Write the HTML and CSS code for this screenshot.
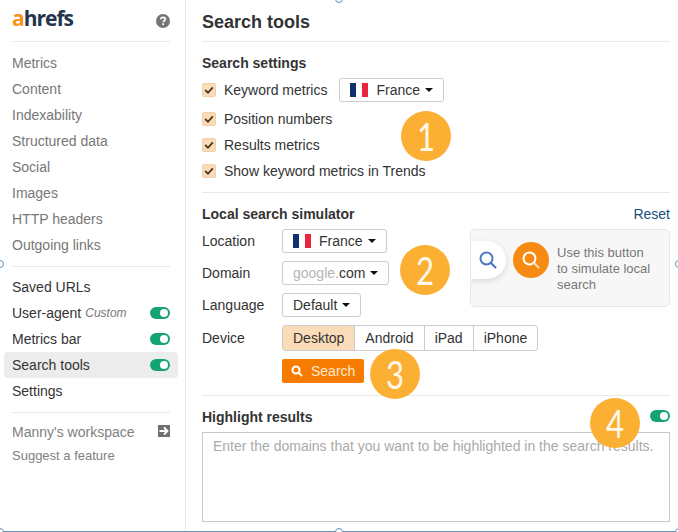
FILE: index.html
```html
<!DOCTYPE html>
<html lang="en">
<head>
<meta charset="utf-8">
<title>Ahrefs - Search tools</title>
<link rel="stylesheet" href="styles.css">
</head>
<body>
<div class="app">
  <aside class="sidebar">
    <div class="brand">
      <span class="logo"><span class="logo-a">a</span>hrefs</span>
      <svg class="help" width="14" height="14" viewBox="0 0 14 14"><circle cx="7" cy="7" r="7" fill="#757575"/><path d="M4.8 5.3C4.9 4 5.8 3.3 7.1 3.3c1.300 0 2.200.8 2.200 1.900 0 1-.6 1.400-1.200 1.800-.5.3-.8.600-.8 1.200" fill="none" stroke="#fff" stroke-width="1.700"/><rect x="6.200" y="9.300" width="1.800" height="1.800" fill="#fff"/></svg>
    </div>
    <nav class="nav nav-muted">
      <a>Metrics</a><a>Content</a><a>Indexability</a><a>Structured data</a><a>Social</a><a>Images</a><a>HTTP headers</a><a>Outgoing links</a>
    </nav>
    <nav class="nav nav-main">
      <a>Saved URLs</a>
      <a>User-agent <em>Custom</em><span class="toggle"></span></a>
      <a>Metrics bar<span class="toggle"></span></a>
      <a class="active">Search tools<span class="toggle"></span></a>
      <a>Settings</a>
    </nav>
    <div class="foot">
      <div class="workspace">Manny's workspace
        <svg width="12" height="12" viewBox="0 0 12 12"><rect width="12" height="12" fill="#707070"/><path d="M1.500 6H9M6 2.500 9.500 6 6 9.500" fill="none" stroke="#fff" stroke-width="1.800"/></svg>
      </div>
      <div class="suggest">Suggest a feature</div>
    </div>
  </aside>

  <main class="main">
    <h1>Search tools</h1>

    <section class="settings">
      <h2>Search settings</h2>
      <div class="check-row first">
        <span class="check"><svg width="10" height="10" viewBox="0 0 10 10"><path d="M1.200 5 4 7.800 8.800 2.400" fill="none" stroke="#4a3320" stroke-width="1.800"/></svg></span>
        <span>Keyword metrics</span>
        <button class="select select-first"><span class="flag"><i class="b"></i><i class="w"></i><i class="r"></i></span>France<span class="caret"></span></button>
      </div>
      <div class="check-row"><span class="check"><svg width="10" height="10" viewBox="0 0 10 10"><path d="M1.200 5 4 7.800 8.800 2.400" fill="none" stroke="#4a3320" stroke-width="1.800"/></svg></span><span>Position numbers</span></div>
      <div class="check-row"><span class="check"><svg width="10" height="10" viewBox="0 0 10 10"><path d="M1.200 5 4 7.800 8.800 2.400" fill="none" stroke="#4a3320" stroke-width="1.800"/></svg></span><span>Results metrics</span></div>
      <div class="check-row"><span class="check"><svg width="10" height="10" viewBox="0 0 10 10"><path d="M1.200 5 4 7.800 8.800 2.400" fill="none" stroke="#4a3320" stroke-width="1.800"/></svg></span><span>Show keyword metrics in Trends</span></div>
    </section>

    <section class="simulator">
      <div class="sim-head"><h2>Local search simulator</h2><a class="reset">Reset</a></div>
      <div class="sim-body">
        <div class="form">
          <div class="form-row"><label>Location</label><button class="select"><span class="flag"><i class="b"></i><i class="w"></i><i class="r"></i></span>France<span class="caret"></span></button></div>
          <div class="form-row"><label>Domain</label><button class="select"><span class="ghost">google.</span>com<span class="caret"></span></button></div>
          <div class="form-row"><label>Language</label><button class="select">Default<span class="caret"></span></button></div>
          <div class="form-row device"><label>Device</label>
            <div class="segments"><span class="seg on">Desktop</span><span class="seg">Android</span><span class="seg">iPad</span><span class="seg">iPhone</span></div>
          </div>
          <div class="form-row submit"><label></label>
            <button class="search-btn"><svg width="12" height="12" viewBox="0 0 12 12"><circle cx="5" cy="5" r="3.500" fill="none" stroke="#fff" stroke-width="2"/><path d="M7.600 7.600 11 11" stroke="#fff" stroke-width="2"/></svg>Search</button>
          </div>
        </div>
        <div class="hint">
          <span class="hint-white"><svg width="20" height="20" viewBox="0 0 20 20"><circle cx="8.500" cy="8.500" r="6" fill="none" stroke="#4a78c4" stroke-width="2"/><path d="M13 13 18 18" stroke="#4a78c4" stroke-width="2.200"/></svg></span>
          <span class="hint-orange"><svg width="20" height="20" viewBox="0 0 20 20"><circle cx="8.500" cy="8.500" r="6" fill="none" stroke="#fff" stroke-width="2"/><path d="M13 13 18 18" stroke="#ffdcb4" stroke-width="2.200"/></svg></span>
          <p>Use this button to simulate local search</p>
        </div>
      </div>
    </section>

    <section class="highlight">
      <div class="hl-head"><h2>Highlight results</h2><span class="toggle"></span></div>
      <div class="textarea">Enter the domains that you want to be highlighted in the search results.</div>
    </section>
  </main>
</div>

<span class="badge b1"><span class="digit">1</span></span>
<span class="badge b2"><span class="digit">2</span></span>
<span class="badge b3"><span class="digit">3</span></span>
<span class="badge b4"><span class="digit">4</span></span>

<span class="handle h-top"></span>
<span class="handle h-left"></span>
<span class="handle h-right"></span>
<span class="handle h-bottom"></span>
<span class="handle h-bl"></span>
<span class="handle h-br"></span>
</body>
</html>
```
FILE: styles.css
```css
* { box-sizing: border-box; }
html, body { margin: 0; height: 100%; }
body {
  position: relative;
  width: 678px;
  height: 532px;
  overflow: hidden;
  background: #fff;
  font: 14px/20px "Liberation Sans", Arial, sans-serif;
  color: #333;
}
.app { display: flex; height: 532px; border-bottom: 1px solid #6f94b5; }

/* Sidebar */
.sidebar { width: 186px; flex: none; border-right: 1px solid #e6e8ec; padding: 0 7px 0 4px; }
.brand {
  display: flex; justify-content: space-between; align-items: center;
  height: 42px; margin: 0 8px 8px 8px; padding: 0 0 2px; border-bottom: 1px solid #e8e8e8;
}
.logo { font: 700 21px/24px "Open Sans", "Liberation Sans", sans-serif; letter-spacing: -1px; color: #24344d; margin-top: -3px; }
.logo-a { color: #f7941d; }
.help { margin-top: 3px; }
.nav a { display: flex; align-items: center; height: 26px; padding: 0 8px; white-space: nowrap; }
.nav-muted { color: #777; padding-bottom: 8px; }
.nav-main { padding-top: 8px; position: relative; }
.nav-main::before { content: ""; position: absolute; top: 0; left: 8px; right: 8px; border-top: 1px solid #e8e8e8; }
.nav-main a { color: #333; }
.nav-main em { color: #777; font-size: 12px; margin-left: 4px; }
.nav-main a.active { background: #ececec; border-radius: 4px; }
.nav-main a .toggle { margin-left: auto; }
.toggle {
  display: block; position: relative; flex: none;
  width: 20px; height: 12px; border-radius: 6px; background: #16a374;
}
.toggle::after {
  content: ""; position: absolute; right: 2px; top: 2px;
  width: 8px; height: 8px; border-radius: 50%; background: #fff;
}
.foot { margin: 8px 8px 0; padding-top: 8px; border-top: 1px solid #e8e8e8; color: #808080; }
.workspace { display: flex; justify-content: space-between; align-items: center; height: 22px; }
.workspace svg { margin-top: -3px; }
.suggest { font-size: 13px; margin-top: 1px; height: 24px; line-height: 24px; }

/* Main */
.main { flex: 1; padding: 0 8px 0 16px; min-width: 0; }
h1 { margin: 0; height: 42px; font-size: 18px; line-height: 44px; font-weight: 700; border-bottom: 1px solid #e8e8e8; }
h2 { margin: 0; font-size: 14px; line-height: 20px; font-weight: 700; }
.settings { padding: 11px 0; border-bottom: 1px solid #e8e8e8; height: 151px; }
.check-row { display: flex; align-items: center; height: 26px; }
.check-row.first { height: 28px; margin-top: 3px; margin-bottom: 2px; }
.check {
  display: flex; align-items: center; justify-content: center; flex: none;
  width: 14px; height: 14px; margin-right: 8px;
  background: #fbdcb8; border: 1px solid #f3cfa6; border-radius: 2px;
}
.select {
  display: inline-flex; align-items: center; height: 24px; padding: 0 10px;
  font: inherit; color: #333; background: #fff;
  border: 1px solid #ccc; border-radius: 3px;
}
.select-first { margin-left: 12px; }
.flag { display: inline-flex; width: 18px; height: 14px; margin-right: 8px; }
.flag i { flex: 1; }
.flag .b { background: #10306f; }
.flag .w { background: #fff; }
.flag .r { background: #e8253d; }
.caret {
  width: 0; height: 0; margin-left: 5px;
  border-left: 4px solid transparent; border-right: 4px solid transparent; border-top: 4px solid #111;
}
.ghost { color: #b5b5b5; }

.simulator { padding-top: 11px; border-bottom: 1px solid #e8e8e8; height: 203px; }
.sim-head { display: flex; justify-content: space-between; height: 25px; }
.reset { color: #1a4d80; }
.sim-body { display: flex; justify-content: space-between; height: 155px; }
.form { flex: none; width: 268px; }
.form-row { display: flex; align-items: center; height: 24px; margin-bottom: 8px; }
.form-row label { width: 80px; flex: none; }
.form-row.device { height: 26px; }
.segments { display: flex; flex: none; height: 26px; border: 1px solid #ccc; border-radius: 3px; }
.seg { padding: 0 10px; line-height: 24px; border-left: 1px solid #ccc; }
.seg:first-child { border-left: 0; }
.seg.on { background: #fbdcb8; border-radius: 2px 0 0 2px; }
.search-btn {
  display: inline-flex; align-items: center; gap: 8px; height: 24px; padding: 0 9px;
  font: inherit; color: #ffe9d2; background: #f57c00; border: 0; border-radius: 2px;
}
.hint {
  position: relative; display: flex; align-items: center; gap: 8px; flex: none;
  width: 200px; height: 78px; overflow: hidden; padding: 2px 12px 0 42px;
  background: #f7f7f7; border: 1px solid #e8e8e8; border-radius: 5px;
}
.hint-white, .hint-orange { display: flex; align-items: center; justify-content: center; flex: none; width: 36px; height: 36px; }
.hint-white {
  position: absolute; left: -1px; top: 11px; height: 38px; background: #fff;
  border-radius: 0 19px 19px 0; box-shadow: 0 2px 6px rgba(0,0,0,.12);
}
.hint-orange { background: #f78a12; border-radius: 50%; align-self: flex-start; margin-top: 10px; }
.hint p { margin: 0; font-size: 13px; line-height: 16px; color: #777; }

.highlight { padding-top: 11px; }
.hl-head { display: flex; justify-content: space-between; align-items: center; height: 20px; margin-bottom: 5px; }
.hl-head .toggle { margin-top: -2px; }
.textarea {
  height: 90px; padding: 3px 10px; border: 1px solid #c4c8cc;
  color: #aaa; white-space: nowrap; overflow: hidden;
}

/* Overlays */
.badge {
  position: absolute; width: 50px; height: 50px; border-radius: 50%;
  background: #fbb034; color: #fff8ea; text-align: center;
  font: 400 38px/50px Lato, "Open Sans", sans-serif;
}
.digit { display: inline-block; transform: scaleX(.82); }
.b1 { left: 401px; top: 111px; }
.b2 { left: 400px; top: 245px; }
.b3 { left: 370px; top: 349px; }
.b4 { left: 590px; top: 398px; }
.handle {
  position: absolute; width: 8px; height: 8px; border-radius: 50%;
  background: #fff; border: 1px solid #5f93bd;
}
.h-top { left: 335px; top: -5px; }
.h-left { left: -4px; top: 260px; }
.h-right { left: 675px; top: 260px; }
.h-bottom { left: 335px; top: 528px; }
.h-bl { left: -4px; top: 528px; }
.h-br { left: 675px; top: 528px; }
```
